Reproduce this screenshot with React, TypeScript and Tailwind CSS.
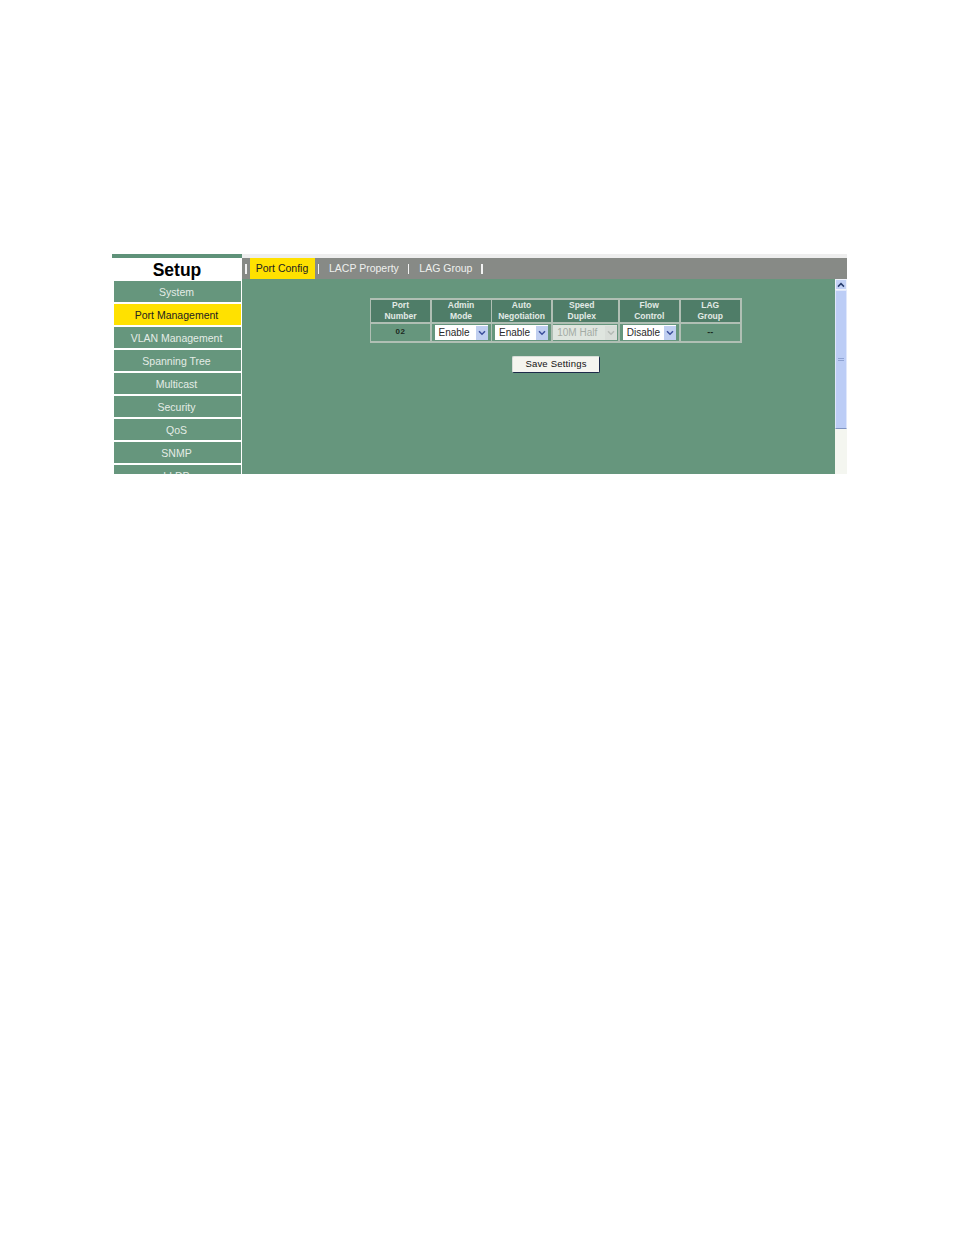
const menu = ["System", "Port Management", "VLAN Management", "Spanning Tree", "Multicast", "Security", "QoS", "SNMP", "LLDP"];
const heads = [["Port", "Number"], ["Admin", "Mode"], ["Auto", "Negotiation"], ["Speed", "Duplex"], ["Flow", "Control"], ["LAG", "Group"]];

function Sel({ label, w, disabled }: { label: string; w: string; disabled?: boolean }) {
  return (
    <div className={`${w} h-[15px] mt-[1px] flex items-center justify-between pl-[4px] text-[10px] leading-none whitespace-nowrap ${disabled ? "bg-[#dfe5df] text-[#a3aba4]" : "bg-white text-[#2a2a2a]"}`}>
      <span className="pt-[1px]">{label}</span>
      <span className={`w-[12px] h-[14px] shrink-0 flex items-center justify-center ${disabled ? "bg-[#d8ddd8]" : "bg-[#c0cff0]"}`}>
        <svg width="8" height="6" viewBox="0 0 8 6">
          <path d="M1 1.2 L4 4.2 L7 1.2" fill="none" stroke={disabled ? "#b5bab5" : "#3b4f9c"} strokeWidth="1.5" />
        </svg>
      </span>
    </div>
  );
}

export default function App() {
  return (
    <div className="w-[954px] h-[1235px] bg-white pt-[254px] pl-[112px] font-['Liberation_Sans',Arial,sans-serif]">
      <div className="w-[735px] h-[220px] overflow-hidden flex">
        <div className="w-[130px] shrink-0 flex flex-col">
          <div className="h-[4px] bg-[#5f9279] shrink-0" />
          <div className="h-[23px] shrink-0 bg-white flex items-center justify-center text-[17.5px] font-bold text-black pt-[1px]">Setup</div>
          <div className="flex flex-col gap-[1px] pl-[2px] pr-[1px]">
            {menu.map((m) => (
              <div
                key={m}
                className={`h-[22px] shrink-0 flex items-center justify-center text-[10.5px] pt-[2px] pr-[2px] border-b border-white ${m === "Port Management" ? "bg-[#ffe100] text-[#222]" : "bg-[#66967d] text-[#e4ece6]"}`}
              >
                {m}
              </div>
            ))}
          </div>
        </div>
        <div className="flex-1 flex flex-col">
          <div className="h-[4px] bg-[#eeeeee] shrink-0" />
          <div className="h-[21px] shrink-0 bg-[#878a86] flex items-center text-[10.5px] text-[#eef0ee]">
            <span className="ml-[3px] w-[1.5px] h-[10px] bg-[#f2f2f2]" />
            <span className="ml-[3px] h-[21px] w-[65px] pt-[1px] bg-[#ffe100] text-[#222] flex items-center justify-center">Port Config</span>
            <span className="ml-[3px] w-[1.5px] h-[10px] bg-[#f2f2f2]" />
            <span className="ml-[10px] pt-[1px]">LACP Property</span>
            <span className="ml-[9px] w-[1.5px] h-[10px] bg-[#f2f2f2]" />
            <span className="ml-[10px] pt-[1px]">LAG Group</span>
            <span className="ml-[9px] w-[1.5px] h-[10px] bg-[#f2f2f2]" />
          </div>
          <div className="flex-1 flex bg-[#66967d]">
            <div className="flex-1 flex flex-col items-center pt-[19px] pl-[1px]">
              <div className="w-[372px] ml-[33px] grid grid-cols-[59px_59px_59px_65.5px_59.5px_59.5px] gap-[1.5px] bg-[#b0bfb4] p-[1.5px]">
                {heads.map((h) => (
                  <div key={h[0]} className={`h-[22.5px] bg-[#4f7d68] flex flex-col items-center justify-center text-[8.5px] leading-[10.5px] text-[#e2eae5] font-bold ${h[0] === "Speed" ? "pr-[7px]" : ""}`}>
                    <span>{h[0]}</span>
                    <span>{h[1]}</span>
                  </div>
                ))}
                <div className="h-[17.5px] bg-[#66967d] flex items-center justify-center text-[8px] font-bold tracking-[0.5px] text-[#1c2a22]">02</div>
                <div className="h-[17.5px] bg-[#66967d] flex items-center justify-center"><Sel label="Enable" w="w-[53px]" /></div>
                <div className="h-[17.5px] bg-[#66967d] flex items-center justify-center"><Sel label="Enable" w="w-[53px]" /></div>
                <div className="h-[17.5px] bg-[#66967d] flex items-center justify-center"><Sel label="10M Half" w="w-[64px]" disabled /></div>
                <div className="h-[17.5px] bg-[#66967d] flex items-center justify-center"><Sel label="Disable" w="w-[53px]" /></div>
                <div className="h-[17.5px] bg-[#66967d] flex items-center justify-center text-[9px] font-bold text-[#1c2a22]">--</div>
              </div>
              <div className="mt-[13px] ml-[34px] w-[88px] h-[17px] bg-[#f5f5ef] border border-[#1d2b4a] rounded-[2px] border-t-[#d8ddd8] border-l-[#d8ddd8] flex items-center justify-center text-[9.5px] text-[#111] tracking-[0.2px]">
                Save Settings
              </div>
            </div>
            <div className="w-[12px] shrink-0 bg-[#f4f6f0] flex flex-col">
              <div className="h-[11px] bg-[#c3d2f5] border border-[#eef2fb] flex items-center justify-center">
                <svg width="8" height="6" viewBox="0 0 8 6">
                  <path d="M1 4.6 L4 1.6 L7 4.6" fill="none" stroke="#2a3f6f" strokeWidth="1.5" />
                </svg>
              </div>
              <div className="h-[139px] bg-[#bccdf6] border border-[#dfe7fb] border-b-[#7f93c0] rounded-[1px] flex items-center justify-center">
                <div className="w-[6px] h-[3px] border-y border-[#8fa3d3]" />
              </div>
            </div>
          </div>
        </div>
      </div>
    </div>
  );
}
